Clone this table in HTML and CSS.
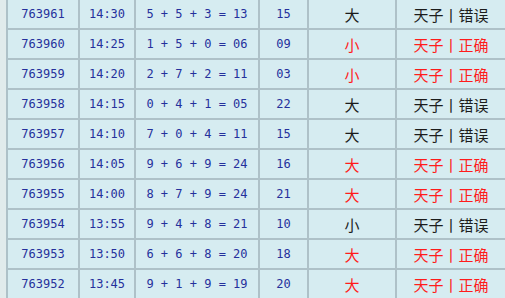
FILE: index.html
```html
<!DOCTYPE html>
<html>
<head>
<meta charset="utf-8">
<link rel="stylesheet" href="styles.css">
</head>
<body>
<div class="page">
  <div class="grid">
    <div class="c num">763961</div><div class="c num">14:30</div><div class="c num">5 + 5 + 3 = 13</div><div class="c num">15</div><div class="c zh">大</div><div class="c zh">天子丨错误</div>
    <div class="c num">763960</div><div class="c num">14:25</div><div class="c num">1 + 5 + 0 = 06</div><div class="c num">09</div><div class="c zh red">小</div><div class="c zh red">天子丨正确</div>
    <div class="c num">763959</div><div class="c num">14:20</div><div class="c num">2 + 7 + 2 = 11</div><div class="c num">03</div><div class="c zh red">小</div><div class="c zh red">天子丨正确</div>
    <div class="c num">763958</div><div class="c num">14:15</div><div class="c num">0 + 4 + 1 = 05</div><div class="c num">22</div><div class="c zh">大</div><div class="c zh">天子丨错误</div>
    <div class="c num">763957</div><div class="c num">14:10</div><div class="c num">7 + 0 + 4 = 11</div><div class="c num">15</div><div class="c zh">大</div><div class="c zh">天子丨错误</div>
    <div class="c num">763956</div><div class="c num">14:05</div><div class="c num">9 + 6 + 9 = 24</div><div class="c num">16</div><div class="c zh red">大</div><div class="c zh red">天子丨正确</div>
    <div class="c num">763955</div><div class="c num">14:00</div><div class="c num">8 + 7 + 9 = 24</div><div class="c num">21</div><div class="c zh red">大</div><div class="c zh red">天子丨正确</div>
    <div class="c num">763954</div><div class="c num">13:55</div><div class="c num">9 + 4 + 8 = 21</div><div class="c num">10</div><div class="c zh">小</div><div class="c zh">天子丨错误</div>
    <div class="c num">763953</div><div class="c num">13:50</div><div class="c num">6 + 6 + 8 = 20</div><div class="c num">18</div><div class="c zh red">大</div><div class="c zh red">天子丨正确</div>
    <div class="c num">763952</div><div class="c num">13:45</div><div class="c num">9 + 1 + 9 = 19</div><div class="c num">20</div><div class="c zh red">大</div><div class="c zh red">天子丨正确</div>
  </div>
</div>
</body>
</html>
```
FILE: styles.css
```css
html, body {
  margin: 0;
  padding: 0;
  background: #dfeaeb;
}
.page {
  width: 505px;
  height: 298px;
  overflow: hidden;
  padding-left: 6px;
  box-sizing: border-box;
  background: #e1ebec;
}
.grid {
  display: grid;
  grid-template-columns: 70px 54px 122px 47px 86px 1fr;
  grid-auto-rows: 28px;
  gap: 2px;
  padding-left: 2px;
  background: #aec1c8;
}
.c {
  background: #d6ecf1;
  display: flex;
  align-items: center;
  justify-content: center;
  white-space: pre;
}
.num {
  font-family: "DejaVu Sans Mono", monospace;
  font-size: 12px;
  color: #25309c;
}
.zh {
  font-family: "Noto Sans CJK SC", sans-serif;
  font-size: 15px;
  color: #1c1c1c;
}
.red {
  color: #ff1c1c;
}
```
